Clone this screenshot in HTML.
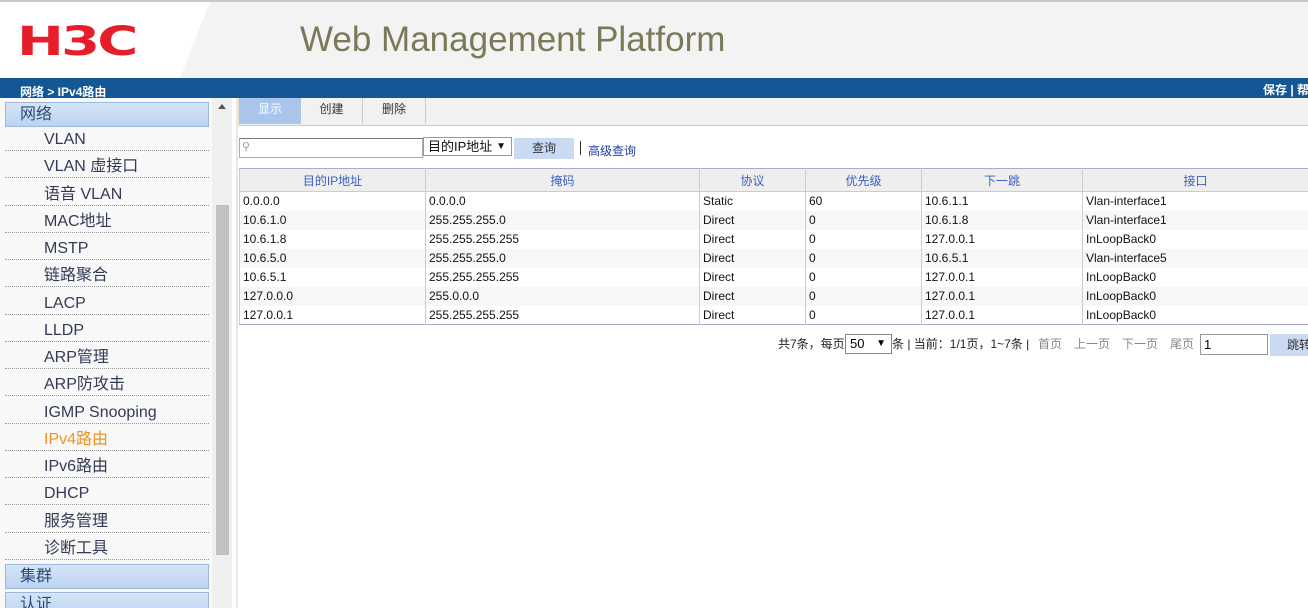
<!DOCTYPE html>
<html><head><meta charset="utf-8"><style>
*{margin:0;padding:0;box-sizing:border-box}
html,body{width:1308px;height:608px;overflow:hidden}
body{background:#fff;font-family:"Liberation Sans","Noto Sans CJK SC",sans-serif;position:relative}
.abs{position:absolute}
#hdr{left:0;top:0;width:1308px;height:78px;background:#f3f3f3;border-top:2px solid #c8c8c8}
#bar{left:0;top:78px;width:1308px;height:20px;background:#135894;color:#fff;font-size:12px;font-weight:bold;overflow:hidden}
#side{left:0;top:98px;width:212px;height:510px;background:#f8f8f8;overflow:hidden}
.grp{position:absolute;left:5px;width:204px;height:25px;border:1px solid #9ab8de;background:linear-gradient(#d6e5f7,#bcd3f0);color:#2b4a78;font-size:16px;padding-left:14px;line-height:23px}
.it{position:absolute;left:5px;width:204px;height:27px;border-bottom:1px dotted #999;color:#333a55;font-size:16px;padding-left:39px;line-height:31px}
#track{left:212px;top:98px;width:20px;height:510px;background:#f0f0f0}
#thumb{left:216px;top:205px;width:13px;height:350px;background:#c1c1c1}
#tabs{left:238px;top:98px;width:1070px;height:28px;background:#f1f1f1;border-bottom:1px solid #c8c8c8;border-left:1px solid #e8e3d5}
.tab{position:absolute;top:0;height:26px;font-size:12px;line-height:22px;text-align:center;color:#333;border-right:1px solid #ccc}
table{border-collapse:collapse;font-size:12px}
td{height:19px;padding-left:3px;border-right:1px solid #ccc;color:#111;white-space:nowrap}
th{height:23px;font-weight:normal;color:#3b5fc0;background:#eeeeee;border-right:1px solid #ccc;border-bottom:1px solid #ccc}
tr:nth-child(odd) td{background:#f7f7f7}
.pg{position:absolute;top:337px;font-size:12px;line-height:14px;white-space:nowrap}
</style></head><body>
<div id="hdr" class="abs"></div>
<div class="abs" style="left:0;top:2px;width:180px;height:76px;background:#fff"></div>
<div class="abs" style="left:180px;top:2px;width:0;height:0;border-top:76px solid #fff;border-right:30px solid transparent"></div>
<div class="abs" style="left:17px;top:22px;color:#e61e2a;font-size:40px;font-weight:bold;line-height:40px;transform:scaleX(1.4);transform-origin:left;font-family:'DejaVu Sans',sans-serif;letter-spacing:-2px">H3C</div>
<div class="abs" style="left:300px;top:20px;color:#7a7a58;font-size:35px;line-height:40px">Web Management Platform</div>
<div id="bar" class="abs"><span style="position:absolute;left:20px;top:5px;font-size:12px">网络 &gt; IPv4路由</span><span style="position:absolute;left:1263px;top:3px;white-space:nowrap">保存 | 帮</span></div>
<div id="side" class="abs">
<div class="grp" style="top:4px">网络</div>
<div class="it" style="top:26px">VLAN</div>
<div class="it" style="top:53px">VLAN 虚接口</div>
<div class="it" style="top:81px">语音 VLAN</div>
<div class="it" style="top:108px">MAC地址</div>
<div class="it" style="top:135px">MSTP</div>
<div class="it" style="top:162px">链路聚合</div>
<div class="it" style="top:190px">LACP</div>
<div class="it" style="top:217px">LLDP</div>
<div class="it" style="top:244px">ARP管理</div>
<div class="it" style="top:271px">ARP防攻击</div>
<div class="it" style="top:299px">IGMP Snooping</div>
<div class="it" style="top:326px;color:#f0921e">IPv4路由</div>
<div class="it" style="top:353px">IPv6路由</div>
<div class="it" style="top:380px">DHCP</div>
<div class="it" style="top:408px">服务管理</div>
<div class="it" style="top:435px">诊断工具</div>
<div class="grp" style="top:466px">集群</div>
<div class="grp" style="top:494px">认证</div>
</div>
<div id="track" class="abs"></div>
<div id="thumb" class="abs"></div>
<div class="abs" style="left:218px;top:104px;width:0;height:0;border-left:4px solid transparent;border-right:4px solid transparent;border-bottom:5px solid #555"></div>
<div class="abs" style="left:236px;top:98px;width:2px;height:510px;background:#ece7da"></div>
<div id="tabs" class="abs">
<div class="tab" style="left:0;width:62px;background:#a9c5ea;color:#fff;border-right:none">显示</div>
<div class="tab" style="left:62px;width:62px">创建</div>
<div class="tab" style="left:124px;width:63px">删除</div>
</div>
<div class="abs" style="left:239px;top:138px;width:184px;height:20px;border:1px solid #aaa;border-top-color:#777;background:#fff"><span style="position:absolute;left:2px;top:1px;font-size:11px;color:#999">&#9906;</span></div>
<div class="abs" style="left:423px;top:137px;width:89px;height:19px;border:1px solid #999;background:#fff;font-size:13px;line-height:17px;padding-left:4px;color:#111">目的IP地址 <span style="font-size:10px;position:absolute;right:5px">▼</span></div>
<div class="abs" style="left:514px;top:138px;width:60px;height:21px;background:#c9daf2;font-size:12px;line-height:21px;text-align:center;color:#333">查询</div>
<div class="abs" style="left:580px;top:141px;width:1px;height:14px;background:#333"></div>
<div class="abs" style="left:588px;top:142px;font-size:12px;color:#1e3fa8">高级查询</div>
<table class="abs" style="left:239px;top:168px;width:1070px;border-top:1px solid #aac;border-bottom:1px solid #aac;border-left:1px solid #ccc">
<tr><th style="width:186px">目的IP地址</th><th style="width:274px">掩码</th><th style="width:106px">协议</th><th style="width:116px">优先级</th><th style="width:161px">下一跳</th><th>接口</th></tr>
<tr><td>0.0.0.0</td><td>0.0.0.0</td><td>Static</td><td>60</td><td>10.6.1.1</td><td>Vlan-interface1</td></tr>
<tr><td>10.6.1.0</td><td>255.255.255.0</td><td>Direct</td><td>0</td><td>10.6.1.8</td><td>Vlan-interface1</td></tr>
<tr><td>10.6.1.8</td><td>255.255.255.255</td><td>Direct</td><td>0</td><td>127.0.0.1</td><td>InLoopBack0</td></tr>
<tr><td>10.6.5.0</td><td>255.255.255.0</td><td>Direct</td><td>0</td><td>10.6.5.1</td><td>Vlan-interface5</td></tr>
<tr><td>10.6.5.1</td><td>255.255.255.255</td><td>Direct</td><td>0</td><td>127.0.0.1</td><td>InLoopBack0</td></tr>
<tr><td>127.0.0.0</td><td>255.0.0.0</td><td>Direct</td><td>0</td><td>127.0.0.1</td><td>InLoopBack0</td></tr>
<tr><td>127.0.0.1</td><td>255.255.255.255</td><td>Direct</td><td>0</td><td>127.0.0.1</td><td>InLoopBack0</td></tr>
</table>
<div class="pg" style="left:778px;color:#222">共7条，每页</div>
<div class="abs" style="left:845px;top:334px;width:47px;height:20px;border:1px solid #888;background:#fff;font-size:13px;padding-left:4px;line-height:18px">50<span style="font-size:10px;position:absolute;right:5px">▼</span></div>
<div class="pg" style="left:892px;color:#222">条 | 当前：1/1页，1~7条 |</div>
<div class="pg" style="left:1038px;color:#888">首页</div>
<div class="pg" style="left:1074px;color:#888">上一页</div>
<div class="pg" style="left:1122px;color:#888">下一页</div>
<div class="pg" style="left:1170px;color:#888">尾页</div>
<div class="abs" style="left:1200px;top:334px;width:68px;height:21px;border:1px solid #999;background:#fff;font-size:13px;padding-left:3px;line-height:19px">1</div>
<div class="abs" style="left:1270px;top:334px;width:40px;height:22px;background:#c9daf2;font-size:12px;line-height:22px;padding-left:17px;color:#333;white-space:nowrap;overflow:hidden">跳转</div>
</body></html>
